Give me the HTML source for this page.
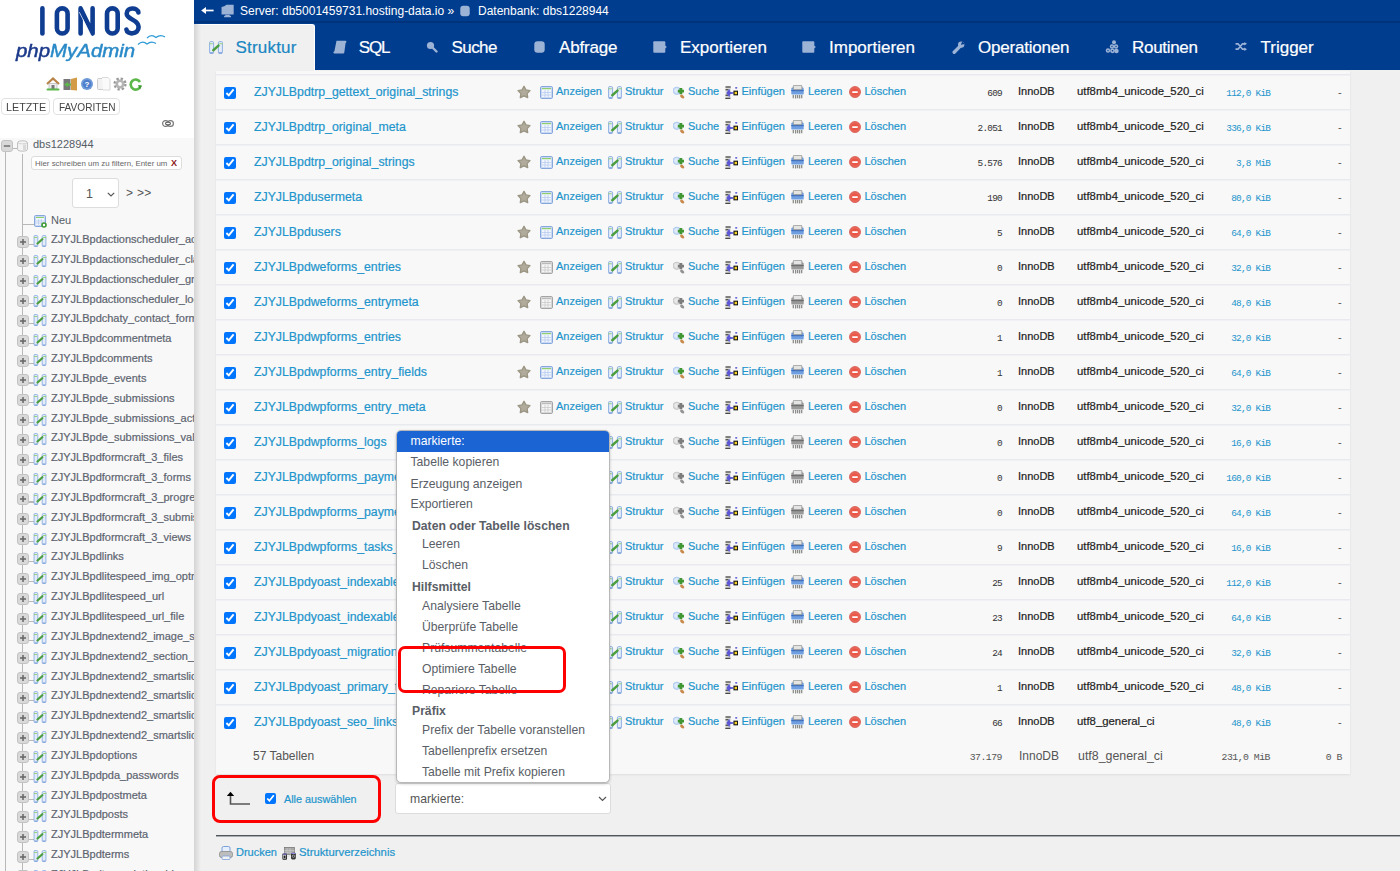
<!DOCTYPE html><html><head><meta charset='utf-8'><style>
*{box-sizing:border-box;margin:0;padding:0}
html,body{width:1400px;height:871px;overflow:hidden;background:#f0f0f0;font-family:"Liberation Sans",sans-serif;position:relative}
.a{position:absolute;white-space:nowrap}
svg{display:block}
.lk{color:#1e95cc;-webkit-text-stroke:0.2px}
.t{font-size:11px;line-height:15px}
.w{-webkit-text-stroke:0.2px}
.m{font-family:"Liberation Mono",monospace}
</style></head><body>

<svg width="0" height="0" style="position:absolute">
<defs>
<symbol id="star" viewBox="0 0 14 14"><path d="M7.00 1.30 L8.94 4.93 L12.99 5.65 L10.14 8.62 L10.70 12.70 L7.00 10.90 L3.30 12.70 L3.86 8.62 L1.01 5.65 L5.06 4.93 Z" fill="#b0ab9a" stroke="#9a9583" stroke-width="1.3" stroke-linejoin="round"/></symbol>
<symbol id="browse" viewBox="0 0 13 13"><rect x="0.5" y="0.5" width="12" height="12" rx="1.2" fill="#c9d9f3" stroke="#86a7dc"/><rect x="2" y="2.5" width="9" height="8.5" fill="#f2f6fd"/><rect x="2" y="2" width="9" height="1.2" fill="#8ed06e"/><path d="M5 4v7M8 4v7M2 6.5h9M2 9h9" stroke="#b7cbee" stroke-width="0.8"/></symbol>
<symbol id="struct" viewBox="0 0 14 13"><path d="M0.6 1.4 Q0.6 0.6 1.4 0.6 H3.4 Q4.6 0.6 4.6 1.8 V11.6 Q4.6 12.4 3.8 12.4 H1.4 Q0.6 12.4 0.6 11.6 Z" fill="#e4ecfa" stroke="#8eb0e2" stroke-width="1"/><path d="M13.4 1.4 Q13.4 0.6 12.6 0.6 H10.6 Q9.4 0.6 9.4 1.8 V11.6 Q9.4 12.4 10.2 12.4 H12.6 Q13.4 12.4 13.4 11.6 Z" fill="#e4ecfa" stroke="#8eb0e2" stroke-width="1"/><path d="M1 11.9h3.2M9.8 11.9h3.2" stroke="#7a9fd8" stroke-width="1.2"/><path d="M0.4 2.8h3.4M10.4 2.8h3.4" stroke="#98d27c" stroke-width="1.1"/><path d="M4.3 9.2 L9.5 4.6" stroke="#4c9e40" stroke-width="2.5" stroke-linecap="round"/></symbol>
<symbol id="search" viewBox="0 0 12 13"><circle cx="3.8" cy="4.8" r="3.7" fill="#c6daf6" stroke="#aac6ee" stroke-width="0.8"/><circle cx="3.6" cy="4.6" r="2.3" fill="#dfeafb"/><path d="M7.9 2v6.2M4.8 5.2h6.2" stroke="#3f9633" stroke-width="2.8"/><ellipse cx="9.2" cy="10.6" rx="2.3" ry="1.5" fill="#c98a4e" transform="rotate(40 9.2 10.6)"/></symbol>
<symbol id="insert" viewBox="0 0 13 13"><rect x="0.5" y="0.3" width="5.2" height="12.6" fill="#d8d8d4"/><path d="M0.5 1h5.2M0.5 3.8h3M0.5 9.2h3M0.3 12.3h5" stroke="#222" stroke-width="1"/><path d="M1.3 7 L4.3 2.8 L5.3 5.9 L8.4 6.2 V7.8 L5.3 8.1 L4.3 11.3 Z" fill="#5b57d6"/><rect x="9" y="5.2" width="3.6" height="3.6" fill="#f5d22a" stroke="#111" stroke-width="1.1"/><ellipse cx="11.2" cy="1.8" rx="1.2" ry="0.9" fill="#6060d8"/></symbol>
<symbol id="empty" viewBox="0 0 13 14"><path d="M2.3 10v3.3M4.6 10v3.6M6.6 10v3.2M8.6 10v3.6M10.7 10v3.3" stroke="#8c8c88" stroke-width="1.3"/><rect x="0.3" y="2.6" width="12.4" height="7" rx="1.2" fill="#6f9fe0"/><rect x="0.3" y="5" width="12.4" height="1.2" fill="#3f70c0"/><rect x="2.3" y="0.3" width="8.6" height="4.4" rx="1" fill="#e4e4e2" stroke="#8a8a86" stroke-width="0.8"/></symbol>
<symbol id="drop" viewBox="0 0 12 12"><circle cx="6" cy="6" r="5.5" fill="#e8685a" stroke="#d6564a" stroke-width="0.8"/><circle cx="6" cy="6" r="3.6" fill="#ea5546"/><rect x="3.2" y="5.2" width="5.6" height="1.8" rx="0.4" fill="#fff"/></symbol>
<symbol id="t_sql" viewBox="0 0 14 14"><path d="M3.5 0.8 H12.5 C13.6 0.8 13.8 2.6 12.6 2.9 L11.3 12.6 C11.2 13.2 10.8 13.4 10.2 13.4 H1.2 C0.2 13.4 0 11.6 1.4 11.3 Z" fill="#9db3d6"/></symbol>
<symbol id="t_search" viewBox="0 0 12 12"><circle cx="4.5" cy="4.5" r="3.6" fill="#9db3d6"/><path d="M6.5 6.5 L10.5 10.5" stroke="#9db3d6" stroke-width="2.4" stroke-linecap="round"/></symbol>
<symbol id="t_db" viewBox="0 0 11 12"><rect x="0.3" y="0.3" width="10.4" height="11.4" rx="3.2" fill="#9db3d6"/></symbol>
<symbol id="t_exp" viewBox="0 0 14 12"><rect x="0.3" y="0.3" width="12" height="11.4" rx="0.9" fill="#9db3d6"/><path d="M12 4.6 L13.9 6 L12 7.4Z" fill="#9db3d6"/></symbol>
<symbol id="t_wrench" viewBox="0 0 14 14"><path d="M2.2 12.2 L8 6.4" stroke="#9db3d6" stroke-width="3.4" stroke-linecap="round"/><circle cx="9.2" cy="4.6" r="3.2" fill="#9db3d6"/><path d="M8.8 4.8 L10.3 1.2 L13.2 3.9 Z" fill="#003d8f"/></symbol>
<symbol id="t_routine" viewBox="0 0 14 14"><g fill="#9db3d6"><circle cx="9" cy="2.2" r="2"/><circle cx="7" cy="6.5" r="2.2"/><circle cx="11" cy="6.5" r="2.2"/><circle cx="3" cy="10.5" r="2.2"/><circle cx="7.5" cy="10.8" r="2.4"/><circle cx="11.5" cy="11" r="2.2"/></g><g fill="#003d8f"><circle cx="7" cy="6.5" r="0.7"/><circle cx="11" cy="6.5" r="0.7"/><circle cx="7.5" cy="10.8" r="0.8"/><circle cx="3" cy="10.5" r="0.7"/></g></symbol>
<symbol id="t_trig" viewBox="0 0 12 9"><path d="M0.5 1.8 H3 L7.5 7.2 H10 M0.5 7.2 H3 L7.5 1.8 H10" stroke="#9db3d6" stroke-width="1.7" fill="none"/><path d="M9.3 0 L12 1.8 L9.3 3.6Z M9.3 5.4 L12 7.2 L9.3 9Z" fill="#9db3d6"/></symbol>
<symbol id="t_server" viewBox="0 0 12 12"><path d="M3 1.5 L5 0.3 H11.7 V9.3 H0.5 V2.3 Z" fill="#9db3d6"/><rect x="4" y="9.5" width="4" height="1.2" fill="#9db3d6"/><rect x="2.8" y="10.4" width="6.5" height="1.4" rx="0.6" fill="#9db3d6"/></symbol>
<symbol id="plus" viewBox="0 0 12 12"><rect x="0.5" y="0.5" width="11" height="11" rx="2.5" fill="#d9d9d9" stroke="#c2c2c2"/><path d="M3 6h6M6 3v6" stroke="#666" stroke-width="1.5"/></symbol>
<symbol id="minus" viewBox="0 0 12 12"><rect x="0.5" y="0.5" width="11" height="11" rx="2.5" fill="#d9d9d9" stroke="#c2c2c2"/><path d="M2.8 6h6.4" stroke="#777" stroke-width="1.6"/></symbol>
<symbol id="sdb" viewBox="0 0 11 12"><path d="M0.6 2.6 C0.6 0.2 10.4 0.2 10.4 2.6 V9.4 C10.4 11.8 0.6 11.8 0.6 9.4 Z" fill="#f4f4f4" stroke="#bdbdbd"/><path d="M0.8 2.8 C2 4.2 9 4.2 10.2 2.8" stroke="#c8c8c8" fill="none" stroke-width="0.8"/><rect x="6" y="4.5" width="3" height="5.5" fill="#d9d9d9"/></symbol>
<symbol id="newt" viewBox="0 0 13 13"><rect x="0.5" y="0.5" width="11" height="11" rx="1.2" fill="#c9d9f3" stroke="#86a7dc"/><rect x="2" y="2.5" width="8" height="7.5" fill="#f2f6fd"/><rect x="2" y="2" width="8" height="1" fill="#8ed06e"/><path d="M4.6 4v6M7.3 4v6M2 6h8M2 8h8" stroke="#b7cbee" stroke-width="0.8"/><circle cx="10" cy="10" r="2.8" fill="#3e9a33"/><circle cx="10" cy="10" r="1.2" fill="#fff"/></symbol>
<symbol id="print" viewBox="0 0 14 14"><rect x="3" y="0.5" width="8" height="6" rx="1.5" fill="#e6effc" stroke="#7aa0dc"/><rect x="0.5" y="5.5" width="13" height="6" rx="2" fill="#bdbdbd" stroke="#8a8a8a" stroke-width="0.8"/><rect x="3" y="10" width="8" height="3.5" rx="1" fill="#f2f2f2" stroke="#7aa0dc" stroke-width="0.8"/></symbol>
<symbol id="sv" viewBox="0 0 14 13"><rect x="2.5" y="0.3" width="10" height="7" fill="#a8a8a8" stroke="#666" stroke-width="0.6"/><path d="M5 1v6M8 1v6M2.5 3.5h10M2.5 5.3h10" stroke="#d0d0d0" stroke-width="0.6"/><rect x="0.4" y="6.5" width="4.6" height="6.2" rx="1" fill="#222"/><rect x="9" y="5.8" width="4.8" height="6.6" rx="1.4" fill="#333"/><rect x="0.8" y="6.6" width="3.8" height="1.1" fill="#8a84e0"/><rect x="9.4" y="5.9" width="4" height="1.1" fill="#8a84e0"/><path d="M5 10 L9 8" stroke="#ddd" stroke-width="1"/><rect x="1.6" y="8.4" width="2.2" height="3.2" fill="none" stroke="#ddd" stroke-width="0.6"/><circle cx="11.4" cy="9.2" r="1.2" fill="none" stroke="#ddd" stroke-width="0.6"/></symbol>
</defs></svg>

<div class='a' style='left:0;top:0;width:194px;height:871px;background:#f8f8f8'></div>
<div class='a' style='left:0;top:0;width:194px;height:138px;background:#fff'></div>
<div class='a' style='left:194px;top:0;width:1206px;height:70px;background:#003d8f'></div>
<div class='a' style='left:194px;top:21px;width:1206px;height:2px;background:#00337a'></div>
<svg class='a' style='left:201px;top:5px' width='13' height='11' viewBox='0 0 13 11'><path d='M3 5.5 H12.6' stroke='#fff' stroke-width='1.7'/><path d='M0.2 5.5 L5 2 V9 Z' fill='#fff'/></svg>
<svg class='a' style='left:221px;top:4px' width='13' height='14'><use href='#t_server'/></svg>
<div class='a' style='left:240px;top:4px;font-size:12px;color:#fff;line-height:15px'>Server: db5001459731.hosting-data.io &raquo;</div>
<svg class='a' style='left:460px;top:5px' width='10' height='12'><use href='#t_db'/></svg>
<div class='a' style='left:478px;top:4px;font-size:12px;color:#fff;line-height:15px'>Datenbank: dbs1228944</div>
<div class='a' style='left:194px;top:24px;width:121px;height:47px;background:#f0f0f0;border-top:1px solid #fff;border-right:1px solid #fff;border-top-right-radius:3px'></div>
<div class='a' style='left:194px;top:24px;width:7px;height:847px;background:linear-gradient(90deg,#d4d4d4,rgba(239,239,239,0))'></div>
<div class='a w' style='left:235.5px;top:38px;letter-spacing:0.2px;font-size:17px;line-height:20px;color:#1a87c2'>Struktur</div>
<div class='a w' style='left:358.7px;top:38px;letter-spacing:-1.1px;font-size:17px;line-height:20px;color:#fff'>SQL</div>
<div class='a w' style='left:451.6px;top:38px;letter-spacing:-0.6px;font-size:17px;line-height:20px;color:#fff'>Suche</div>
<div class='a w' style='left:559px;top:38px;letter-spacing:-0.2px;font-size:17px;line-height:20px;color:#fff'>Abfrage</div>
<div class='a w' style='left:680px;top:38px;letter-spacing:0px;font-size:17px;line-height:20px;color:#fff'>Exportieren</div>
<div class='a w' style='left:829px;top:38px;letter-spacing:0px;font-size:17px;line-height:20px;color:#fff'>Importieren</div>
<div class='a w' style='left:978px;top:38px;letter-spacing:-0.22px;font-size:17px;line-height:20px;color:#fff'>Operationen</div>
<div class='a w' style='left:1132px;top:38px;letter-spacing:-0.3px;font-size:17px;line-height:20px;color:#fff'>Routinen</div>
<div class='a w' style='left:1260.5px;top:38px;letter-spacing:0px;font-size:17px;line-height:20px;color:#fff'>Trigger</div>
<svg class='a' style='left:209px;top:40.5px' width='14' height='13'><use href='#struct'/></svg>
<svg class='a' style='left:333px;top:40px' width='14' height='14'><use href='#t_sql'/></svg>
<svg class='a' style='left:426px;top:41px' width='12' height='12'><use href='#t_search'/></svg>
<svg class='a' style='left:534px;top:41px' width='11' height='12'><use href='#t_db'/></svg>
<svg class='a' style='left:653px;top:41px' width='14' height='12'><use href='#t_exp'/></svg>
<svg class='a' style='left:802px;top:41px' width='14' height='12'><use href='#t_exp'/></svg>
<svg class='a' style='left:952px;top:40px' width='14' height='14'><use href='#t_wrench'/></svg>
<svg class='a' style='left:1105px;top:40px' width='14' height='14'><use href='#t_routine'/></svg>
<svg class='a' style='left:1235px;top:42px' width='12' height='9'><use href='#t_trig'/></svg>
<div class='a' style='left:216px;top:71px;width:1134px;height:703px;background:#f8f8f8;box-shadow:0 1px 2px rgba(0,0,0,.08)'></div>
<div class='a' style='left:216px;top:74px;width:1134px;height:1px;background:#e8eaee'></div><div class='a' style='left:216px;top:75px;width:1134px;height:1px;background:#f0f1f4'></div>
<input type='checkbox' checked class='a' style='left:224px;top:87px;width:12px;height:12px;margin:0'>
<div class='a lk' style='left:254px;top:85px;font-size:12.3px;line-height:15px'>ZJYJLBpdtrp_gettext_original_strings</div>
<svg class='a' style='left:517px;top:85px' width='14' height='14'><use href='#star'/></svg>
<div class='a lk t' style='left:556px;top:84px'>Anzeigen</div>
<svg class='a' style='left:540px;top:86px' width='13' height='13'><use href='#browse'/></svg>
<div class='a lk t' style='left:625px;top:84px'>Struktur</div>
<svg class='a' style='left:608px;top:86px' width='14' height='13'><use href='#struct'/></svg>
<div class='a lk t' style='left:688px;top:84px'>Suche</div>
<svg class='a' style='left:673px;top:86px' width='12' height='13'><use href='#search'/></svg>
<div class='a lk t' style='left:741.5px;top:84px'>Einfügen</div>
<svg class='a' style='left:725px;top:86px' width='13' height='13'><use href='#insert'/></svg>
<div class='a lk t' style='left:808px;top:84px'>Leeren</div>
<svg class='a' style='left:791px;top:85px' width='13' height='14'><use href='#empty'/></svg>
<div class='a lk t' style='left:864.5px;top:84px'>Löschen</div>
<svg class='a' style='left:849px;top:86px' width='12' height='12'><use href='#drop'/></svg>
<div class='a m' style='right:398px;top:87.2px;font-size:9.4px;letter-spacing:-0.75px;line-height:13px;color:#333'>609</div>
<div class='a t w' style='left:1018px;top:84px;color:#222'>InnoDB</div>
<div class='a w' style='left:1077px;top:84px;font-size:11.35px;line-height:15px;color:#222'>utf8mb4_unicode_520_ci</div>
<div class='a m' style='right:129.79999999999995px;top:87.2px;font-size:9.4px;letter-spacing:-0.75px;line-height:13px;color:#1e95cc'>112,0 KiB</div>
<div class='a t' style='left:1338px;top:85px;color:#555'>-</div>
<div class='a' style='left:216px;top:109px;width:1134px;height:1px;background:#e8eaee'></div><div class='a' style='left:216px;top:110px;width:1134px;height:1px;background:#f0f1f4'></div>
<input type='checkbox' checked class='a' style='left:224px;top:122px;width:12px;height:12px;margin:0'>
<div class='a lk' style='left:254px;top:120px;font-size:12.3px;line-height:15px'>ZJYJLBpdtrp_original_meta</div>
<svg class='a' style='left:517px;top:120px' width='14' height='14'><use href='#star'/></svg>
<div class='a lk t' style='left:556px;top:119px'>Anzeigen</div>
<svg class='a' style='left:540px;top:121px' width='13' height='13'><use href='#browse'/></svg>
<div class='a lk t' style='left:625px;top:119px'>Struktur</div>
<svg class='a' style='left:608px;top:121px' width='14' height='13'><use href='#struct'/></svg>
<div class='a lk t' style='left:688px;top:119px'>Suche</div>
<svg class='a' style='left:673px;top:121px' width='12' height='13'><use href='#search'/></svg>
<div class='a lk t' style='left:741.5px;top:119px'>Einfügen</div>
<svg class='a' style='left:725px;top:121px' width='13' height='13'><use href='#insert'/></svg>
<div class='a lk t' style='left:808px;top:119px'>Leeren</div>
<svg class='a' style='left:791px;top:120px' width='13' height='14'><use href='#empty'/></svg>
<div class='a lk t' style='left:864.5px;top:119px'>Löschen</div>
<svg class='a' style='left:849px;top:121px' width='12' height='12'><use href='#drop'/></svg>
<div class='a m' style='right:398px;top:122.2px;font-size:9.4px;letter-spacing:-0.75px;line-height:13px;color:#333'>2.051</div>
<div class='a t w' style='left:1018px;top:119px;color:#222'>InnoDB</div>
<div class='a w' style='left:1077px;top:119px;font-size:11.35px;line-height:15px;color:#222'>utf8mb4_unicode_520_ci</div>
<div class='a m' style='right:129.79999999999995px;top:122.2px;font-size:9.4px;letter-spacing:-0.75px;line-height:13px;color:#1e95cc'>336,0 KiB</div>
<div class='a t' style='left:1338px;top:120px;color:#555'>-</div>
<div class='a' style='left:216px;top:144px;width:1134px;height:1px;background:#e8eaee'></div><div class='a' style='left:216px;top:145px;width:1134px;height:1px;background:#f0f1f4'></div>
<input type='checkbox' checked class='a' style='left:224px;top:157px;width:12px;height:12px;margin:0'>
<div class='a lk' style='left:254px;top:155px;font-size:12.3px;line-height:15px'>ZJYJLBpdtrp_original_strings</div>
<svg class='a' style='left:517px;top:155px' width='14' height='14'><use href='#star'/></svg>
<div class='a lk t' style='left:556px;top:154px'>Anzeigen</div>
<svg class='a' style='left:540px;top:156px' width='13' height='13'><use href='#browse'/></svg>
<div class='a lk t' style='left:625px;top:154px'>Struktur</div>
<svg class='a' style='left:608px;top:156px' width='14' height='13'><use href='#struct'/></svg>
<div class='a lk t' style='left:688px;top:154px'>Suche</div>
<svg class='a' style='left:673px;top:156px' width='12' height='13'><use href='#search'/></svg>
<div class='a lk t' style='left:741.5px;top:154px'>Einfügen</div>
<svg class='a' style='left:725px;top:156px' width='13' height='13'><use href='#insert'/></svg>
<div class='a lk t' style='left:808px;top:154px'>Leeren</div>
<svg class='a' style='left:791px;top:155px' width='13' height='14'><use href='#empty'/></svg>
<div class='a lk t' style='left:864.5px;top:154px'>Löschen</div>
<svg class='a' style='left:849px;top:156px' width='12' height='12'><use href='#drop'/></svg>
<div class='a m' style='right:398px;top:157.2px;font-size:9.4px;letter-spacing:-0.75px;line-height:13px;color:#333'>5.576</div>
<div class='a t w' style='left:1018px;top:154px;color:#222'>InnoDB</div>
<div class='a w' style='left:1077px;top:154px;font-size:11.35px;line-height:15px;color:#222'>utf8mb4_unicode_520_ci</div>
<div class='a m' style='right:129.79999999999995px;top:157.2px;font-size:9.4px;letter-spacing:-0.75px;line-height:13px;color:#1e95cc'>3,8 MiB</div>
<div class='a t' style='left:1338px;top:155px;color:#555'>-</div>
<div class='a' style='left:216px;top:179px;width:1134px;height:1px;background:#e8eaee'></div><div class='a' style='left:216px;top:180px;width:1134px;height:1px;background:#f0f1f4'></div>
<input type='checkbox' checked class='a' style='left:224px;top:192px;width:12px;height:12px;margin:0'>
<div class='a lk' style='left:254px;top:190px;font-size:12.3px;line-height:15px'>ZJYJLBpdusermeta</div>
<svg class='a' style='left:517px;top:190px' width='14' height='14'><use href='#star'/></svg>
<div class='a lk t' style='left:556px;top:189px'>Anzeigen</div>
<svg class='a' style='left:540px;top:191px' width='13' height='13'><use href='#browse'/></svg>
<div class='a lk t' style='left:625px;top:189px'>Struktur</div>
<svg class='a' style='left:608px;top:191px' width='14' height='13'><use href='#struct'/></svg>
<div class='a lk t' style='left:688px;top:189px'>Suche</div>
<svg class='a' style='left:673px;top:191px' width='12' height='13'><use href='#search'/></svg>
<div class='a lk t' style='left:741.5px;top:189px'>Einfügen</div>
<svg class='a' style='left:725px;top:191px' width='13' height='13'><use href='#insert'/></svg>
<div class='a lk t' style='left:808px;top:189px'>Leeren</div>
<svg class='a' style='left:791px;top:190px' width='13' height='14'><use href='#empty'/></svg>
<div class='a lk t' style='left:864.5px;top:189px'>Löschen</div>
<svg class='a' style='left:849px;top:191px' width='12' height='12'><use href='#drop'/></svg>
<div class='a m' style='right:398px;top:192.2px;font-size:9.4px;letter-spacing:-0.75px;line-height:13px;color:#333'>190</div>
<div class='a t w' style='left:1018px;top:189px;color:#222'>InnoDB</div>
<div class='a w' style='left:1077px;top:189px;font-size:11.35px;line-height:15px;color:#222'>utf8mb4_unicode_520_ci</div>
<div class='a m' style='right:129.79999999999995px;top:192.2px;font-size:9.4px;letter-spacing:-0.75px;line-height:13px;color:#1e95cc'>80,0 KiB</div>
<div class='a t' style='left:1338px;top:190px;color:#555'>-</div>
<div class='a' style='left:216px;top:214px;width:1134px;height:1px;background:#e8eaee'></div><div class='a' style='left:216px;top:215px;width:1134px;height:1px;background:#f0f1f4'></div>
<input type='checkbox' checked class='a' style='left:224px;top:227px;width:12px;height:12px;margin:0'>
<div class='a lk' style='left:254px;top:225px;font-size:12.3px;line-height:15px'>ZJYJLBpdusers</div>
<svg class='a' style='left:517px;top:225px' width='14' height='14'><use href='#star'/></svg>
<div class='a lk t' style='left:556px;top:224px'>Anzeigen</div>
<svg class='a' style='left:540px;top:226px' width='13' height='13'><use href='#browse'/></svg>
<div class='a lk t' style='left:625px;top:224px'>Struktur</div>
<svg class='a' style='left:608px;top:226px' width='14' height='13'><use href='#struct'/></svg>
<div class='a lk t' style='left:688px;top:224px'>Suche</div>
<svg class='a' style='left:673px;top:226px' width='12' height='13'><use href='#search'/></svg>
<div class='a lk t' style='left:741.5px;top:224px'>Einfügen</div>
<svg class='a' style='left:725px;top:226px' width='13' height='13'><use href='#insert'/></svg>
<div class='a lk t' style='left:808px;top:224px'>Leeren</div>
<svg class='a' style='left:791px;top:225px' width='13' height='14'><use href='#empty'/></svg>
<div class='a lk t' style='left:864.5px;top:224px'>Löschen</div>
<svg class='a' style='left:849px;top:226px' width='12' height='12'><use href='#drop'/></svg>
<div class='a m' style='right:398px;top:227.2px;font-size:9.4px;letter-spacing:-0.75px;line-height:13px;color:#333'>5</div>
<div class='a t w' style='left:1018px;top:224px;color:#222'>InnoDB</div>
<div class='a w' style='left:1077px;top:224px;font-size:11.35px;line-height:15px;color:#222'>utf8mb4_unicode_520_ci</div>
<div class='a m' style='right:129.79999999999995px;top:227.2px;font-size:9.4px;letter-spacing:-0.75px;line-height:13px;color:#1e95cc'>64,0 KiB</div>
<div class='a t' style='left:1338px;top:225px;color:#555'>-</div>
<div class='a' style='left:216px;top:249px;width:1134px;height:1px;background:#e8eaee'></div><div class='a' style='left:216px;top:250px;width:1134px;height:1px;background:#f0f1f4'></div>
<input type='checkbox' checked class='a' style='left:224px;top:262px;width:12px;height:12px;margin:0'>
<div class='a lk' style='left:254px;top:260px;font-size:12.3px;line-height:15px'>ZJYJLBpdweforms_entries</div>
<svg class='a' style='left:517px;top:260px' width='14' height='14'><use href='#star'/></svg>
<div class='a lk t' style='left:556px;top:259px'>Anzeigen</div>
<svg class='a' style='left:540px;top:261px;filter:grayscale(1)' width='13' height='13'><use href='#browse'/></svg>
<div class='a lk t' style='left:625px;top:259px'>Struktur</div>
<svg class='a' style='left:608px;top:261px' width='14' height='13'><use href='#struct'/></svg>
<div class='a lk t' style='left:688px;top:259px'>Suche</div>
<svg class='a' style='left:673px;top:261px;filter:grayscale(1)' width='12' height='13'><use href='#search'/></svg>
<div class='a lk t' style='left:741.5px;top:259px'>Einfügen</div>
<svg class='a' style='left:725px;top:261px' width='13' height='13'><use href='#insert'/></svg>
<div class='a lk t' style='left:808px;top:259px'>Leeren</div>
<svg class='a' style='left:791px;top:260px;filter:grayscale(1)' width='13' height='14'><use href='#empty'/></svg>
<div class='a lk t' style='left:864.5px;top:259px'>Löschen</div>
<svg class='a' style='left:849px;top:261px' width='12' height='12'><use href='#drop'/></svg>
<div class='a m' style='right:398px;top:262.2px;font-size:9.4px;letter-spacing:-0.75px;line-height:13px;color:#333'>0</div>
<div class='a t w' style='left:1018px;top:259px;color:#222'>InnoDB</div>
<div class='a w' style='left:1077px;top:259px;font-size:11.35px;line-height:15px;color:#222'>utf8mb4_unicode_520_ci</div>
<div class='a m' style='right:129.79999999999995px;top:262.2px;font-size:9.4px;letter-spacing:-0.75px;line-height:13px;color:#1e95cc'>32,0 KiB</div>
<div class='a t' style='left:1338px;top:260px;color:#555'>-</div>
<div class='a' style='left:216px;top:284px;width:1134px;height:1px;background:#e8eaee'></div><div class='a' style='left:216px;top:285px;width:1134px;height:1px;background:#f0f1f4'></div>
<input type='checkbox' checked class='a' style='left:224px;top:297px;width:12px;height:12px;margin:0'>
<div class='a lk' style='left:254px;top:295px;font-size:12.3px;line-height:15px'>ZJYJLBpdweforms_entrymeta</div>
<svg class='a' style='left:517px;top:295px' width='14' height='14'><use href='#star'/></svg>
<div class='a lk t' style='left:556px;top:294px'>Anzeigen</div>
<svg class='a' style='left:540px;top:296px;filter:grayscale(1)' width='13' height='13'><use href='#browse'/></svg>
<div class='a lk t' style='left:625px;top:294px'>Struktur</div>
<svg class='a' style='left:608px;top:296px' width='14' height='13'><use href='#struct'/></svg>
<div class='a lk t' style='left:688px;top:294px'>Suche</div>
<svg class='a' style='left:673px;top:296px;filter:grayscale(1)' width='12' height='13'><use href='#search'/></svg>
<div class='a lk t' style='left:741.5px;top:294px'>Einfügen</div>
<svg class='a' style='left:725px;top:296px' width='13' height='13'><use href='#insert'/></svg>
<div class='a lk t' style='left:808px;top:294px'>Leeren</div>
<svg class='a' style='left:791px;top:295px;filter:grayscale(1)' width='13' height='14'><use href='#empty'/></svg>
<div class='a lk t' style='left:864.5px;top:294px'>Löschen</div>
<svg class='a' style='left:849px;top:296px' width='12' height='12'><use href='#drop'/></svg>
<div class='a m' style='right:398px;top:297.2px;font-size:9.4px;letter-spacing:-0.75px;line-height:13px;color:#333'>0</div>
<div class='a t w' style='left:1018px;top:294px;color:#222'>InnoDB</div>
<div class='a w' style='left:1077px;top:294px;font-size:11.35px;line-height:15px;color:#222'>utf8mb4_unicode_520_ci</div>
<div class='a m' style='right:129.79999999999995px;top:297.2px;font-size:9.4px;letter-spacing:-0.75px;line-height:13px;color:#1e95cc'>48,0 KiB</div>
<div class='a t' style='left:1338px;top:295px;color:#555'>-</div>
<div class='a' style='left:216px;top:319px;width:1134px;height:1px;background:#e8eaee'></div><div class='a' style='left:216px;top:320px;width:1134px;height:1px;background:#f0f1f4'></div>
<input type='checkbox' checked class='a' style='left:224px;top:332px;width:12px;height:12px;margin:0'>
<div class='a lk' style='left:254px;top:330px;font-size:12.3px;line-height:15px'>ZJYJLBpdwpforms_entries</div>
<svg class='a' style='left:517px;top:330px' width='14' height='14'><use href='#star'/></svg>
<div class='a lk t' style='left:556px;top:329px'>Anzeigen</div>
<svg class='a' style='left:540px;top:331px' width='13' height='13'><use href='#browse'/></svg>
<div class='a lk t' style='left:625px;top:329px'>Struktur</div>
<svg class='a' style='left:608px;top:331px' width='14' height='13'><use href='#struct'/></svg>
<div class='a lk t' style='left:688px;top:329px'>Suche</div>
<svg class='a' style='left:673px;top:331px' width='12' height='13'><use href='#search'/></svg>
<div class='a lk t' style='left:741.5px;top:329px'>Einfügen</div>
<svg class='a' style='left:725px;top:331px' width='13' height='13'><use href='#insert'/></svg>
<div class='a lk t' style='left:808px;top:329px'>Leeren</div>
<svg class='a' style='left:791px;top:330px' width='13' height='14'><use href='#empty'/></svg>
<div class='a lk t' style='left:864.5px;top:329px'>Löschen</div>
<svg class='a' style='left:849px;top:331px' width='12' height='12'><use href='#drop'/></svg>
<div class='a m' style='right:398px;top:332.2px;font-size:9.4px;letter-spacing:-0.75px;line-height:13px;color:#333'>1</div>
<div class='a t w' style='left:1018px;top:329px;color:#222'>InnoDB</div>
<div class='a w' style='left:1077px;top:329px;font-size:11.35px;line-height:15px;color:#222'>utf8mb4_unicode_520_ci</div>
<div class='a m' style='right:129.79999999999995px;top:332.2px;font-size:9.4px;letter-spacing:-0.75px;line-height:13px;color:#1e95cc'>32,0 KiB</div>
<div class='a t' style='left:1338px;top:330px;color:#555'>-</div>
<div class='a' style='left:216px;top:354px;width:1134px;height:1px;background:#e8eaee'></div><div class='a' style='left:216px;top:355px;width:1134px;height:1px;background:#f0f1f4'></div>
<input type='checkbox' checked class='a' style='left:224px;top:367px;width:12px;height:12px;margin:0'>
<div class='a lk' style='left:254px;top:365px;font-size:12.3px;line-height:15px'>ZJYJLBpdwpforms_entry_fields</div>
<svg class='a' style='left:517px;top:365px' width='14' height='14'><use href='#star'/></svg>
<div class='a lk t' style='left:556px;top:364px'>Anzeigen</div>
<svg class='a' style='left:540px;top:366px' width='13' height='13'><use href='#browse'/></svg>
<div class='a lk t' style='left:625px;top:364px'>Struktur</div>
<svg class='a' style='left:608px;top:366px' width='14' height='13'><use href='#struct'/></svg>
<div class='a lk t' style='left:688px;top:364px'>Suche</div>
<svg class='a' style='left:673px;top:366px' width='12' height='13'><use href='#search'/></svg>
<div class='a lk t' style='left:741.5px;top:364px'>Einfügen</div>
<svg class='a' style='left:725px;top:366px' width='13' height='13'><use href='#insert'/></svg>
<div class='a lk t' style='left:808px;top:364px'>Leeren</div>
<svg class='a' style='left:791px;top:365px' width='13' height='14'><use href='#empty'/></svg>
<div class='a lk t' style='left:864.5px;top:364px'>Löschen</div>
<svg class='a' style='left:849px;top:366px' width='12' height='12'><use href='#drop'/></svg>
<div class='a m' style='right:398px;top:367.2px;font-size:9.4px;letter-spacing:-0.75px;line-height:13px;color:#333'>1</div>
<div class='a t w' style='left:1018px;top:364px;color:#222'>InnoDB</div>
<div class='a w' style='left:1077px;top:364px;font-size:11.35px;line-height:15px;color:#222'>utf8mb4_unicode_520_ci</div>
<div class='a m' style='right:129.79999999999995px;top:367.2px;font-size:9.4px;letter-spacing:-0.75px;line-height:13px;color:#1e95cc'>64,0 KiB</div>
<div class='a t' style='left:1338px;top:365px;color:#555'>-</div>
<div class='a' style='left:216px;top:389px;width:1134px;height:1px;background:#e8eaee'></div><div class='a' style='left:216px;top:390px;width:1134px;height:1px;background:#f0f1f4'></div>
<input type='checkbox' checked class='a' style='left:224px;top:402px;width:12px;height:12px;margin:0'>
<div class='a lk' style='left:254px;top:400px;font-size:12.3px;line-height:15px'>ZJYJLBpdwpforms_entry_meta</div>
<svg class='a' style='left:517px;top:400px' width='14' height='14'><use href='#star'/></svg>
<div class='a lk t' style='left:556px;top:399px'>Anzeigen</div>
<svg class='a' style='left:540px;top:401px;filter:grayscale(1)' width='13' height='13'><use href='#browse'/></svg>
<div class='a lk t' style='left:625px;top:399px'>Struktur</div>
<svg class='a' style='left:608px;top:401px' width='14' height='13'><use href='#struct'/></svg>
<div class='a lk t' style='left:688px;top:399px'>Suche</div>
<svg class='a' style='left:673px;top:401px;filter:grayscale(1)' width='12' height='13'><use href='#search'/></svg>
<div class='a lk t' style='left:741.5px;top:399px'>Einfügen</div>
<svg class='a' style='left:725px;top:401px' width='13' height='13'><use href='#insert'/></svg>
<div class='a lk t' style='left:808px;top:399px'>Leeren</div>
<svg class='a' style='left:791px;top:400px;filter:grayscale(1)' width='13' height='14'><use href='#empty'/></svg>
<div class='a lk t' style='left:864.5px;top:399px'>Löschen</div>
<svg class='a' style='left:849px;top:401px' width='12' height='12'><use href='#drop'/></svg>
<div class='a m' style='right:398px;top:402.2px;font-size:9.4px;letter-spacing:-0.75px;line-height:13px;color:#333'>0</div>
<div class='a t w' style='left:1018px;top:399px;color:#222'>InnoDB</div>
<div class='a w' style='left:1077px;top:399px;font-size:11.35px;line-height:15px;color:#222'>utf8mb4_unicode_520_ci</div>
<div class='a m' style='right:129.79999999999995px;top:402.2px;font-size:9.4px;letter-spacing:-0.75px;line-height:13px;color:#1e95cc'>32,0 KiB</div>
<div class='a t' style='left:1338px;top:400px;color:#555'>-</div>
<div class='a' style='left:216px;top:424px;width:1134px;height:1px;background:#e8eaee'></div><div class='a' style='left:216px;top:425px;width:1134px;height:1px;background:#f0f1f4'></div>
<input type='checkbox' checked class='a' style='left:224px;top:437px;width:12px;height:12px;margin:0'>
<div class='a lk' style='left:254px;top:435px;font-size:12.3px;line-height:15px'>ZJYJLBpdwpforms_logs</div>
<svg class='a' style='left:517px;top:435px' width='14' height='14'><use href='#star'/></svg>
<div class='a lk t' style='left:556px;top:434px'>Anzeigen</div>
<svg class='a' style='left:540px;top:436px;filter:grayscale(1)' width='13' height='13'><use href='#browse'/></svg>
<div class='a lk t' style='left:625px;top:434px'>Struktur</div>
<svg class='a' style='left:608px;top:436px' width='14' height='13'><use href='#struct'/></svg>
<div class='a lk t' style='left:688px;top:434px'>Suche</div>
<svg class='a' style='left:673px;top:436px;filter:grayscale(1)' width='12' height='13'><use href='#search'/></svg>
<div class='a lk t' style='left:741.5px;top:434px'>Einfügen</div>
<svg class='a' style='left:725px;top:436px' width='13' height='13'><use href='#insert'/></svg>
<div class='a lk t' style='left:808px;top:434px'>Leeren</div>
<svg class='a' style='left:791px;top:435px;filter:grayscale(1)' width='13' height='14'><use href='#empty'/></svg>
<div class='a lk t' style='left:864.5px;top:434px'>Löschen</div>
<svg class='a' style='left:849px;top:436px' width='12' height='12'><use href='#drop'/></svg>
<div class='a m' style='right:398px;top:437.2px;font-size:9.4px;letter-spacing:-0.75px;line-height:13px;color:#333'>0</div>
<div class='a t w' style='left:1018px;top:434px;color:#222'>InnoDB</div>
<div class='a w' style='left:1077px;top:434px;font-size:11.35px;line-height:15px;color:#222'>utf8mb4_unicode_520_ci</div>
<div class='a m' style='right:129.79999999999995px;top:437.2px;font-size:9.4px;letter-spacing:-0.75px;line-height:13px;color:#1e95cc'>16,0 KiB</div>
<div class='a t' style='left:1338px;top:435px;color:#555'>-</div>
<div class='a' style='left:216px;top:459px;width:1134px;height:1px;background:#e8eaee'></div><div class='a' style='left:216px;top:460px;width:1134px;height:1px;background:#f0f1f4'></div>
<input type='checkbox' checked class='a' style='left:224px;top:472px;width:12px;height:12px;margin:0'>
<div class='a lk' style='left:254px;top:470px;font-size:12.3px;line-height:15px'>ZJYJLBpdwpforms_payments</div>
<svg class='a' style='left:517px;top:470px' width='14' height='14'><use href='#star'/></svg>
<div class='a lk t' style='left:556px;top:469px'>Anzeigen</div>
<svg class='a' style='left:540px;top:471px;filter:grayscale(1)' width='13' height='13'><use href='#browse'/></svg>
<div class='a lk t' style='left:625px;top:469px'>Struktur</div>
<svg class='a' style='left:608px;top:471px' width='14' height='13'><use href='#struct'/></svg>
<div class='a lk t' style='left:688px;top:469px'>Suche</div>
<svg class='a' style='left:673px;top:471px;filter:grayscale(1)' width='12' height='13'><use href='#search'/></svg>
<div class='a lk t' style='left:741.5px;top:469px'>Einfügen</div>
<svg class='a' style='left:725px;top:471px' width='13' height='13'><use href='#insert'/></svg>
<div class='a lk t' style='left:808px;top:469px'>Leeren</div>
<svg class='a' style='left:791px;top:470px;filter:grayscale(1)' width='13' height='14'><use href='#empty'/></svg>
<div class='a lk t' style='left:864.5px;top:469px'>Löschen</div>
<svg class='a' style='left:849px;top:471px' width='12' height='12'><use href='#drop'/></svg>
<div class='a m' style='right:398px;top:472.2px;font-size:9.4px;letter-spacing:-0.75px;line-height:13px;color:#333'>0</div>
<div class='a t w' style='left:1018px;top:469px;color:#222'>InnoDB</div>
<div class='a w' style='left:1077px;top:469px;font-size:11.35px;line-height:15px;color:#222'>utf8mb4_unicode_520_ci</div>
<div class='a m' style='right:129.79999999999995px;top:472.2px;font-size:9.4px;letter-spacing:-0.75px;line-height:13px;color:#1e95cc'>160,0 KiB</div>
<div class='a t' style='left:1338px;top:470px;color:#555'>-</div>
<div class='a' style='left:216px;top:494px;width:1134px;height:1px;background:#e8eaee'></div><div class='a' style='left:216px;top:495px;width:1134px;height:1px;background:#f0f1f4'></div>
<input type='checkbox' checked class='a' style='left:224px;top:507px;width:12px;height:12px;margin:0'>
<div class='a lk' style='left:254px;top:505px;font-size:12.3px;line-height:15px'>ZJYJLBpdwpforms_paymentmeta</div>
<svg class='a' style='left:517px;top:505px' width='14' height='14'><use href='#star'/></svg>
<div class='a lk t' style='left:556px;top:504px'>Anzeigen</div>
<svg class='a' style='left:540px;top:506px;filter:grayscale(1)' width='13' height='13'><use href='#browse'/></svg>
<div class='a lk t' style='left:625px;top:504px'>Struktur</div>
<svg class='a' style='left:608px;top:506px' width='14' height='13'><use href='#struct'/></svg>
<div class='a lk t' style='left:688px;top:504px'>Suche</div>
<svg class='a' style='left:673px;top:506px;filter:grayscale(1)' width='12' height='13'><use href='#search'/></svg>
<div class='a lk t' style='left:741.5px;top:504px'>Einfügen</div>
<svg class='a' style='left:725px;top:506px' width='13' height='13'><use href='#insert'/></svg>
<div class='a lk t' style='left:808px;top:504px'>Leeren</div>
<svg class='a' style='left:791px;top:505px;filter:grayscale(1)' width='13' height='14'><use href='#empty'/></svg>
<div class='a lk t' style='left:864.5px;top:504px'>Löschen</div>
<svg class='a' style='left:849px;top:506px' width='12' height='12'><use href='#drop'/></svg>
<div class='a m' style='right:398px;top:507.2px;font-size:9.4px;letter-spacing:-0.75px;line-height:13px;color:#333'>0</div>
<div class='a t w' style='left:1018px;top:504px;color:#222'>InnoDB</div>
<div class='a w' style='left:1077px;top:504px;font-size:11.35px;line-height:15px;color:#222'>utf8mb4_unicode_520_ci</div>
<div class='a m' style='right:129.79999999999995px;top:507.2px;font-size:9.4px;letter-spacing:-0.75px;line-height:13px;color:#1e95cc'>64,0 KiB</div>
<div class='a t' style='left:1338px;top:505px;color:#555'>-</div>
<div class='a' style='left:216px;top:529px;width:1134px;height:1px;background:#e8eaee'></div><div class='a' style='left:216px;top:530px;width:1134px;height:1px;background:#f0f1f4'></div>
<input type='checkbox' checked class='a' style='left:224px;top:542px;width:12px;height:12px;margin:0'>
<div class='a lk' style='left:254px;top:540px;font-size:12.3px;line-height:15px'>ZJYJLBpdwpforms_tasks_meta</div>
<svg class='a' style='left:517px;top:540px' width='14' height='14'><use href='#star'/></svg>
<div class='a lk t' style='left:556px;top:539px'>Anzeigen</div>
<svg class='a' style='left:540px;top:541px' width='13' height='13'><use href='#browse'/></svg>
<div class='a lk t' style='left:625px;top:539px'>Struktur</div>
<svg class='a' style='left:608px;top:541px' width='14' height='13'><use href='#struct'/></svg>
<div class='a lk t' style='left:688px;top:539px'>Suche</div>
<svg class='a' style='left:673px;top:541px' width='12' height='13'><use href='#search'/></svg>
<div class='a lk t' style='left:741.5px;top:539px'>Einfügen</div>
<svg class='a' style='left:725px;top:541px' width='13' height='13'><use href='#insert'/></svg>
<div class='a lk t' style='left:808px;top:539px'>Leeren</div>
<svg class='a' style='left:791px;top:540px' width='13' height='14'><use href='#empty'/></svg>
<div class='a lk t' style='left:864.5px;top:539px'>Löschen</div>
<svg class='a' style='left:849px;top:541px' width='12' height='12'><use href='#drop'/></svg>
<div class='a m' style='right:398px;top:542.2px;font-size:9.4px;letter-spacing:-0.75px;line-height:13px;color:#333'>9</div>
<div class='a t w' style='left:1018px;top:539px;color:#222'>InnoDB</div>
<div class='a w' style='left:1077px;top:539px;font-size:11.35px;line-height:15px;color:#222'>utf8mb4_unicode_520_ci</div>
<div class='a m' style='right:129.79999999999995px;top:542.2px;font-size:9.4px;letter-spacing:-0.75px;line-height:13px;color:#1e95cc'>16,0 KiB</div>
<div class='a t' style='left:1338px;top:540px;color:#555'>-</div>
<div class='a' style='left:216px;top:564px;width:1134px;height:1px;background:#e8eaee'></div><div class='a' style='left:216px;top:565px;width:1134px;height:1px;background:#f0f1f4'></div>
<input type='checkbox' checked class='a' style='left:224px;top:577px;width:12px;height:12px;margin:0'>
<div class='a lk' style='left:254px;top:575px;font-size:12.3px;line-height:15px'>ZJYJLBpdyoast_indexable</div>
<svg class='a' style='left:517px;top:575px' width='14' height='14'><use href='#star'/></svg>
<div class='a lk t' style='left:556px;top:574px'>Anzeigen</div>
<svg class='a' style='left:540px;top:576px' width='13' height='13'><use href='#browse'/></svg>
<div class='a lk t' style='left:625px;top:574px'>Struktur</div>
<svg class='a' style='left:608px;top:576px' width='14' height='13'><use href='#struct'/></svg>
<div class='a lk t' style='left:688px;top:574px'>Suche</div>
<svg class='a' style='left:673px;top:576px' width='12' height='13'><use href='#search'/></svg>
<div class='a lk t' style='left:741.5px;top:574px'>Einfügen</div>
<svg class='a' style='left:725px;top:576px' width='13' height='13'><use href='#insert'/></svg>
<div class='a lk t' style='left:808px;top:574px'>Leeren</div>
<svg class='a' style='left:791px;top:575px' width='13' height='14'><use href='#empty'/></svg>
<div class='a lk t' style='left:864.5px;top:574px'>Löschen</div>
<svg class='a' style='left:849px;top:576px' width='12' height='12'><use href='#drop'/></svg>
<div class='a m' style='right:398px;top:577.2px;font-size:9.4px;letter-spacing:-0.75px;line-height:13px;color:#333'>25</div>
<div class='a t w' style='left:1018px;top:574px;color:#222'>InnoDB</div>
<div class='a w' style='left:1077px;top:574px;font-size:11.35px;line-height:15px;color:#222'>utf8mb4_unicode_520_ci</div>
<div class='a m' style='right:129.79999999999995px;top:577.2px;font-size:9.4px;letter-spacing:-0.75px;line-height:13px;color:#1e95cc'>112,0 KiB</div>
<div class='a t' style='left:1338px;top:575px;color:#555'>-</div>
<div class='a' style='left:216px;top:599px;width:1134px;height:1px;background:#e8eaee'></div><div class='a' style='left:216px;top:600px;width:1134px;height:1px;background:#f0f1f4'></div>
<input type='checkbox' checked class='a' style='left:224px;top:612px;width:12px;height:12px;margin:0'>
<div class='a lk' style='left:254px;top:610px;font-size:12.3px;line-height:15px'>ZJYJLBpdyoast_indexable_hierarchy</div>
<svg class='a' style='left:517px;top:610px' width='14' height='14'><use href='#star'/></svg>
<div class='a lk t' style='left:556px;top:609px'>Anzeigen</div>
<svg class='a' style='left:540px;top:611px' width='13' height='13'><use href='#browse'/></svg>
<div class='a lk t' style='left:625px;top:609px'>Struktur</div>
<svg class='a' style='left:608px;top:611px' width='14' height='13'><use href='#struct'/></svg>
<div class='a lk t' style='left:688px;top:609px'>Suche</div>
<svg class='a' style='left:673px;top:611px' width='12' height='13'><use href='#search'/></svg>
<div class='a lk t' style='left:741.5px;top:609px'>Einfügen</div>
<svg class='a' style='left:725px;top:611px' width='13' height='13'><use href='#insert'/></svg>
<div class='a lk t' style='left:808px;top:609px'>Leeren</div>
<svg class='a' style='left:791px;top:610px' width='13' height='14'><use href='#empty'/></svg>
<div class='a lk t' style='left:864.5px;top:609px'>Löschen</div>
<svg class='a' style='left:849px;top:611px' width='12' height='12'><use href='#drop'/></svg>
<div class='a m' style='right:398px;top:612.2px;font-size:9.4px;letter-spacing:-0.75px;line-height:13px;color:#333'>23</div>
<div class='a t w' style='left:1018px;top:609px;color:#222'>InnoDB</div>
<div class='a w' style='left:1077px;top:609px;font-size:11.35px;line-height:15px;color:#222'>utf8mb4_unicode_520_ci</div>
<div class='a m' style='right:129.79999999999995px;top:612.2px;font-size:9.4px;letter-spacing:-0.75px;line-height:13px;color:#1e95cc'>64,0 KiB</div>
<div class='a t' style='left:1338px;top:610px;color:#555'>-</div>
<div class='a' style='left:216px;top:634px;width:1134px;height:1px;background:#e8eaee'></div><div class='a' style='left:216px;top:635px;width:1134px;height:1px;background:#f0f1f4'></div>
<input type='checkbox' checked class='a' style='left:224px;top:647px;width:12px;height:12px;margin:0'>
<div class='a lk' style='left:254px;top:645px;font-size:12.3px;line-height:15px'>ZJYJLBpdyoast_migrations</div>
<svg class='a' style='left:517px;top:645px' width='14' height='14'><use href='#star'/></svg>
<div class='a lk t' style='left:556px;top:644px'>Anzeigen</div>
<svg class='a' style='left:540px;top:646px' width='13' height='13'><use href='#browse'/></svg>
<div class='a lk t' style='left:625px;top:644px'>Struktur</div>
<svg class='a' style='left:608px;top:646px' width='14' height='13'><use href='#struct'/></svg>
<div class='a lk t' style='left:688px;top:644px'>Suche</div>
<svg class='a' style='left:673px;top:646px' width='12' height='13'><use href='#search'/></svg>
<div class='a lk t' style='left:741.5px;top:644px'>Einfügen</div>
<svg class='a' style='left:725px;top:646px' width='13' height='13'><use href='#insert'/></svg>
<div class='a lk t' style='left:808px;top:644px'>Leeren</div>
<svg class='a' style='left:791px;top:645px' width='13' height='14'><use href='#empty'/></svg>
<div class='a lk t' style='left:864.5px;top:644px'>Löschen</div>
<svg class='a' style='left:849px;top:646px' width='12' height='12'><use href='#drop'/></svg>
<div class='a m' style='right:398px;top:647.2px;font-size:9.4px;letter-spacing:-0.75px;line-height:13px;color:#333'>24</div>
<div class='a t w' style='left:1018px;top:644px;color:#222'>InnoDB</div>
<div class='a w' style='left:1077px;top:644px;font-size:11.35px;line-height:15px;color:#222'>utf8mb4_unicode_520_ci</div>
<div class='a m' style='right:129.79999999999995px;top:647.2px;font-size:9.4px;letter-spacing:-0.75px;line-height:13px;color:#1e95cc'>32,0 KiB</div>
<div class='a t' style='left:1338px;top:645px;color:#555'>-</div>
<div class='a' style='left:216px;top:669px;width:1134px;height:1px;background:#e8eaee'></div><div class='a' style='left:216px;top:670px;width:1134px;height:1px;background:#f0f1f4'></div>
<input type='checkbox' checked class='a' style='left:224px;top:682px;width:12px;height:12px;margin:0'>
<div class='a lk' style='left:254px;top:680px;font-size:12.3px;line-height:15px'>ZJYJLBpdyoast_primary_term</div>
<svg class='a' style='left:517px;top:680px' width='14' height='14'><use href='#star'/></svg>
<div class='a lk t' style='left:556px;top:679px'>Anzeigen</div>
<svg class='a' style='left:540px;top:681px' width='13' height='13'><use href='#browse'/></svg>
<div class='a lk t' style='left:625px;top:679px'>Struktur</div>
<svg class='a' style='left:608px;top:681px' width='14' height='13'><use href='#struct'/></svg>
<div class='a lk t' style='left:688px;top:679px'>Suche</div>
<svg class='a' style='left:673px;top:681px' width='12' height='13'><use href='#search'/></svg>
<div class='a lk t' style='left:741.5px;top:679px'>Einfügen</div>
<svg class='a' style='left:725px;top:681px' width='13' height='13'><use href='#insert'/></svg>
<div class='a lk t' style='left:808px;top:679px'>Leeren</div>
<svg class='a' style='left:791px;top:680px' width='13' height='14'><use href='#empty'/></svg>
<div class='a lk t' style='left:864.5px;top:679px'>Löschen</div>
<svg class='a' style='left:849px;top:681px' width='12' height='12'><use href='#drop'/></svg>
<div class='a m' style='right:398px;top:682.2px;font-size:9.4px;letter-spacing:-0.75px;line-height:13px;color:#333'>1</div>
<div class='a t w' style='left:1018px;top:679px;color:#222'>InnoDB</div>
<div class='a w' style='left:1077px;top:679px;font-size:11.35px;line-height:15px;color:#222'>utf8mb4_unicode_520_ci</div>
<div class='a m' style='right:129.79999999999995px;top:682.2px;font-size:9.4px;letter-spacing:-0.75px;line-height:13px;color:#1e95cc'>48,0 KiB</div>
<div class='a t' style='left:1338px;top:680px;color:#555'>-</div>
<div class='a' style='left:216px;top:704px;width:1134px;height:1px;background:#e8eaee'></div><div class='a' style='left:216px;top:705px;width:1134px;height:1px;background:#f0f1f4'></div>
<input type='checkbox' checked class='a' style='left:224px;top:717px;width:12px;height:12px;margin:0'>
<div class='a lk' style='left:254px;top:715px;font-size:12.3px;line-height:15px'>ZJYJLBpdyoast_seo_links</div>
<svg class='a' style='left:517px;top:715px' width='14' height='14'><use href='#star'/></svg>
<div class='a lk t' style='left:556px;top:714px'>Anzeigen</div>
<svg class='a' style='left:540px;top:716px' width='13' height='13'><use href='#browse'/></svg>
<div class='a lk t' style='left:625px;top:714px'>Struktur</div>
<svg class='a' style='left:608px;top:716px' width='14' height='13'><use href='#struct'/></svg>
<div class='a lk t' style='left:688px;top:714px'>Suche</div>
<svg class='a' style='left:673px;top:716px' width='12' height='13'><use href='#search'/></svg>
<div class='a lk t' style='left:741.5px;top:714px'>Einfügen</div>
<svg class='a' style='left:725px;top:716px' width='13' height='13'><use href='#insert'/></svg>
<div class='a lk t' style='left:808px;top:714px'>Leeren</div>
<svg class='a' style='left:791px;top:715px' width='13' height='14'><use href='#empty'/></svg>
<div class='a lk t' style='left:864.5px;top:714px'>Löschen</div>
<svg class='a' style='left:849px;top:716px' width='12' height='12'><use href='#drop'/></svg>
<div class='a m' style='right:398px;top:717.2px;font-size:9.4px;letter-spacing:-0.75px;line-height:13px;color:#333'>66</div>
<div class='a t w' style='left:1018px;top:714px;color:#222'>InnoDB</div>
<div class='a w' style='left:1077px;top:714px;font-size:11.35px;line-height:15px;color:#222'>utf8_general_ci</div>
<div class='a m' style='right:129.79999999999995px;top:717.2px;font-size:9.4px;letter-spacing:-0.75px;line-height:13px;color:#1e95cc'>48,0 KiB</div>
<div class='a t' style='left:1338px;top:715px;color:#555'>-</div>
<div class='a' style='left:253px;top:749px;font-size:12px;line-height:15px;color:#555'>57 Tabellen</div>
<div class='a m' style='right:398px;top:750.5px;font-size:9.8px;letter-spacing:-0.5px;line-height:13px;color:#555'>37.179</div>
<div class='a' style='left:1019px;top:749px;font-size:12px;line-height:15px;color:#555'>InnoDB</div>
<div class='a' style='left:1078px;top:749px;font-size:12.4px;line-height:15px;color:#555'>utf8_general_ci</div>
<div class='a m' style='right:130px;top:750.5px;font-size:9.8px;letter-spacing:-0.5px;line-height:13px;color:#555'>231,0 MiB</div>
<div class='a m' style='right:58px;top:750.5px;font-size:9.8px;letter-spacing:-0.5px;line-height:13px;color:#555'>0 B</div>
<div class='a' style='left:216px;top:835px;width:1184px;height:1px;background:#50565c'></div><div class='a' style='left:216px;top:836px;width:1184px;height:1px;background:#a9acb0'></div>
<svg class='a' style='left:219px;top:846px' width='14' height='14'><use href='#print'/></svg>
<div class='a lk t' style='left:236px;top:845px'>Drucken</div>
<svg class='a' style='left:282px;top:847px' width='14' height='13'><use href='#sv'/></svg>
<div class='a lk' style='left:299px;top:845px;font-size:11.3px;line-height:15px'>Strukturverzeichnis</div>
<svg class='a' style='left:226px;top:791px' width='25' height='15' viewBox='0 0 25 15'><path d='M4.5 4 V13 H24' stroke='#555' stroke-width='1.6' fill='none'/><path d='M4.5 0.8 L8.2 5 H0.8 Z' fill='#000'/></svg>
<input type='checkbox' checked class='a' style='left:265px;top:793px;width:11px;height:11px;margin:0'>
<div class='a lk' style='left:284px;top:791.5px;font-size:10.8px;line-height:15px'>Alle auswählen</div>
<div class='a' style='left:212px;top:775px;width:169px;height:48px;border:3.5px solid #f00;border-radius:8px'></div>
<div class='a' style='left:395px;top:783px;width:216px;height:31px;background:#fff;border:1px solid #dcdcdc;border-radius:3px'></div>
<div class='a' style='left:410px;top:791.5px;font-size:12.2px;line-height:15px;color:#555'>markierte:</div>
<svg class='a' style='left:598px;top:796px' width='9' height='6' viewBox='0 0 9 6'><path d='M1 1 L4.5 4.5 L8 1' stroke='#555' stroke-width='1.2' fill='none'/></svg>
<div class='a' style='left:396px;top:430px;width:214px;height:353px;background:#fff;border:1px solid #b8b8b8;border-radius:5px;box-shadow:0 1px 3px rgba(0,0,0,.2);overflow:hidden'><div style='height:20.5px;background:#1a64d3'></div></div>
<div class='a' style='left:410.5px;top:434.0px;font-size:12.2px;line-height:15px;color:#fff;font-weight:normal'>markierte:</div>
<div class='a' style='left:410.5px;top:455.0px;font-size:12.2px;line-height:15px;color:#5a5e66;font-weight:normal'>Tabelle kopieren</div>
<div class='a' style='left:410.5px;top:476.5px;font-size:12.2px;line-height:15px;color:#5a5e66;font-weight:normal'>Erzeugung anzeigen</div>
<div class='a' style='left:410.5px;top:497.3px;font-size:12.2px;line-height:15px;color:#5a5e66;font-weight:normal'>Exportieren</div>
<div class='a' style='left:412px;top:519.0px;font-size:12.2px;line-height:15px;color:#5a5e66;font-weight:bold'>Daten oder Tabelle löschen</div>
<div class='a' style='left:422px;top:537.2px;font-size:12.2px;line-height:15px;color:#5a5e66;font-weight:normal'>Leeren</div>
<div class='a' style='left:422px;top:558.4px;font-size:12.2px;line-height:15px;color:#5a5e66;font-weight:normal'>Löschen</div>
<div class='a' style='left:412px;top:579.6px;font-size:12.2px;line-height:15px;color:#5a5e66;font-weight:bold'>Hilfsmittel</div>
<div class='a' style='left:422px;top:598.9px;font-size:12.2px;line-height:15px;color:#5a5e66;font-weight:normal'>Analysiere Tabelle</div>
<div class='a' style='left:422px;top:619.8px;font-size:12.2px;line-height:15px;color:#5a5e66;font-weight:normal'>Überprüfe Tabelle</div>
<div class='a' style='left:422px;top:641.0px;font-size:12.2px;line-height:15px;color:#5a5e66;font-weight:normal'>Prüfsummentabelle</div>
<div class='a' style='left:422px;top:661.9px;font-size:12.2px;line-height:15px;color:#5a5e66;font-weight:normal'>Optimiere Tabelle</div>
<div class='a' style='left:422px;top:682.7px;font-size:12.2px;line-height:15px;color:#5a5e66;font-weight:normal'>Repariere Tabelle</div>
<div class='a' style='left:412px;top:704.1px;font-size:12.2px;line-height:15px;color:#5a5e66;font-weight:bold'>Präfix</div>
<div class='a' style='left:422px;top:723.1px;font-size:12.2px;line-height:15px;color:#5a5e66;font-weight:normal'>Prefix der Tabelle voranstellen</div>
<div class='a' style='left:422px;top:744.2px;font-size:12.2px;line-height:15px;color:#5a5e66;font-weight:normal'>Tabellenprefix ersetzen</div>
<div class='a' style='left:422px;top:765.3px;font-size:12.2px;line-height:15px;color:#5a5e66;font-weight:normal'>Tabelle mit Prefix kopieren</div>
<div class='a' style='left:398px;top:646px;width:168px;height:47px;border:3.5px solid #f00;border-radius:7px'></div>
<div class='a' style='left:5px;top:151px;width:1.2px;height:720px;background:#b8b8b8'></div>
<div class='a' style='left:22px;top:154px;width:1.2px;height:717px;background:#b8b8b8'></div>
<div class='a' style='left:11px;top:148px;width:7px;height:1.2px;background:#b8b8b8'></div>
<div class='a' style='left:22px;top:224px;width:12px;height:1.2px;background:#b8b8b8'></div>
<svg class='a' style='left:0.5px;top:140px' width='12' height='12'><use href='#minus'/></svg>
<svg class='a' style='left:17px;top:140px' width='11' height='12'><use href='#sdb'/></svg>
<div class='a' style='left:33px;top:137px;font-size:11px;line-height:15px;color:#555d66'>dbs1228944</div>
<div class='a' style='left:31px;top:156px;width:151px;height:14px;background:#fff;border:1px solid #ddd;border-radius:3px'></div>
<div class='a' style='left:35px;top:157.5px;width:134px;overflow:hidden;font-size:7.9px;line-height:11px;color:#666'>Hier schreiben um zu filtern, Enter um a</div>
<div class='a' style='left:171px;top:156.5px;font-size:9px;line-height:12px;color:#8b1a1a;font-weight:bold'>X</div>
<div class='a' style='left:72px;top:178px;width:47px;height:30px;background:#fff;border:1px solid #ddd;border-radius:3px'></div>
<div class='a' style='left:86px;top:186.5px;font-size:12.5px;line-height:15px;color:#555'>1</div>
<svg class='a' style='left:107px;top:192px' width='8' height='5' viewBox='0 0 8 5'><path d='M0.8 0.8 L4 4 L7.2 0.8' stroke='#555' stroke-width='1.2' fill='none'/></svg>
<div class='a' style='left:126px;top:186px;font-size:12px;letter-spacing:0.3px;line-height:15px;color:#555'>&gt; &gt;&gt;</div>
<svg class='a' style='left:34px;top:215px' width='13' height='13'><use href='#newt'/></svg>
<div class='a' style='left:51px;top:213px;font-size:11px;line-height:15px;color:#555d66'>Neu</div>
<div class='a' style='left:0;top:230px;width:194px;height:641px;overflow:hidden'>
<div class='a' style='left:28px;top:13.5px;width:6px;height:1.2px;background:#b8b8b8'></div>
<svg class='a' style='left:17px;top:5.5px' width='12' height='12'><use href='#plus'/></svg>
<svg class='a' style='left:33px;top:5.0px' width='14' height='12'><use href='#struct'/></svg>
<div class='a w' style='left:51px;top:2.0px;font-size:11px;line-height:15px;color:#5d6470'>ZJYJLBpdactionscheduler_actions</div>
<div class='a' style='left:28px;top:33.3px;width:6px;height:1.2px;background:#b8b8b8'></div>
<svg class='a' style='left:17px;top:25.3px' width='12' height='12'><use href='#plus'/></svg>
<svg class='a' style='left:33px;top:24.8px' width='14' height='12'><use href='#struct'/></svg>
<div class='a w' style='left:51px;top:21.8px;font-size:11px;line-height:15px;color:#5d6470'>ZJYJLBpdactionscheduler_claims</div>
<div class='a' style='left:28px;top:53.2px;width:6px;height:1.2px;background:#b8b8b8'></div>
<svg class='a' style='left:17px;top:45.2px' width='12' height='12'><use href='#plus'/></svg>
<svg class='a' style='left:33px;top:44.7px' width='14' height='12'><use href='#struct'/></svg>
<div class='a w' style='left:51px;top:41.7px;font-size:11px;line-height:15px;color:#5d6470'>ZJYJLBpdactionscheduler_groups</div>
<div class='a' style='left:28px;top:73.0px;width:6px;height:1.2px;background:#b8b8b8'></div>
<svg class='a' style='left:17px;top:65.0px' width='12' height='12'><use href='#plus'/></svg>
<svg class='a' style='left:33px;top:64.5px' width='14' height='12'><use href='#struct'/></svg>
<div class='a w' style='left:51px;top:61.5px;font-size:11px;line-height:15px;color:#5d6470'>ZJYJLBpdactionscheduler_logs</div>
<div class='a' style='left:28px;top:92.9px;width:6px;height:1.2px;background:#b8b8b8'></div>
<svg class='a' style='left:17px;top:84.9px' width='12' height='12'><use href='#plus'/></svg>
<svg class='a' style='left:33px;top:84.4px' width='14' height='12'><use href='#struct'/></svg>
<div class='a w' style='left:51px;top:81.4px;font-size:11px;line-height:15px;color:#5d6470'>ZJYJLBpdchaty_contact_form_leads</div>
<div class='a' style='left:28px;top:112.7px;width:6px;height:1.2px;background:#b8b8b8'></div>
<svg class='a' style='left:17px;top:104.7px' width='12' height='12'><use href='#plus'/></svg>
<svg class='a' style='left:33px;top:104.2px' width='14' height='12'><use href='#struct'/></svg>
<div class='a w' style='left:51px;top:101.2px;font-size:11px;line-height:15px;color:#5d6470'>ZJYJLBpdcommentmeta</div>
<div class='a' style='left:28px;top:132.5px;width:6px;height:1.2px;background:#b8b8b8'></div>
<svg class='a' style='left:17px;top:124.5px' width='12' height='12'><use href='#plus'/></svg>
<svg class='a' style='left:33px;top:124.0px' width='14' height='12'><use href='#struct'/></svg>
<div class='a w' style='left:51px;top:121.0px;font-size:11px;line-height:15px;color:#5d6470'>ZJYJLBpdcomments</div>
<div class='a' style='left:28px;top:152.4px;width:6px;height:1.2px;background:#b8b8b8'></div>
<svg class='a' style='left:17px;top:144.4px' width='12' height='12'><use href='#plus'/></svg>
<svg class='a' style='left:33px;top:143.9px' width='14' height='12'><use href='#struct'/></svg>
<div class='a w' style='left:51px;top:140.9px;font-size:11px;line-height:15px;color:#5d6470'>ZJYJLBpde_events</div>
<div class='a' style='left:28px;top:172.2px;width:6px;height:1.2px;background:#b8b8b8'></div>
<svg class='a' style='left:17px;top:164.2px' width='12' height='12'><use href='#plus'/></svg>
<svg class='a' style='left:33px;top:163.7px' width='14' height='12'><use href='#struct'/></svg>
<div class='a w' style='left:51px;top:160.7px;font-size:11px;line-height:15px;color:#5d6470'>ZJYJLBpde_submissions</div>
<div class='a' style='left:28px;top:192.1px;width:6px;height:1.2px;background:#b8b8b8'></div>
<svg class='a' style='left:17px;top:184.1px' width='12' height='12'><use href='#plus'/></svg>
<svg class='a' style='left:33px;top:183.6px' width='14' height='12'><use href='#struct'/></svg>
<div class='a w' style='left:51px;top:180.6px;font-size:11px;line-height:15px;color:#5d6470'>ZJYJLBpde_submissions_actions_log</div>
<div class='a' style='left:28px;top:211.9px;width:6px;height:1.2px;background:#b8b8b8'></div>
<svg class='a' style='left:17px;top:203.9px' width='12' height='12'><use href='#plus'/></svg>
<svg class='a' style='left:33px;top:203.4px' width='14' height='12'><use href='#struct'/></svg>
<div class='a w' style='left:51px;top:200.4px;font-size:11px;line-height:15px;color:#5d6470'>ZJYJLBpde_submissions_values</div>
<div class='a' style='left:28px;top:231.7px;width:6px;height:1.2px;background:#b8b8b8'></div>
<svg class='a' style='left:17px;top:223.7px' width='12' height='12'><use href='#plus'/></svg>
<svg class='a' style='left:33px;top:223.2px' width='14' height='12'><use href='#struct'/></svg>
<div class='a w' style='left:51px;top:220.2px;font-size:11px;line-height:15px;color:#5d6470'>ZJYJLBpdformcraft_3_files</div>
<div class='a' style='left:28px;top:251.6px;width:6px;height:1.2px;background:#b8b8b8'></div>
<svg class='a' style='left:17px;top:243.6px' width='12' height='12'><use href='#plus'/></svg>
<svg class='a' style='left:33px;top:243.1px' width='14' height='12'><use href='#struct'/></svg>
<div class='a w' style='left:51px;top:240.1px;font-size:11px;line-height:15px;color:#5d6470'>ZJYJLBpdformcraft_3_forms</div>
<div class='a' style='left:28px;top:271.4px;width:6px;height:1.2px;background:#b8b8b8'></div>
<svg class='a' style='left:17px;top:263.4px' width='12' height='12'><use href='#plus'/></svg>
<svg class='a' style='left:33px;top:262.9px' width='14' height='12'><use href='#struct'/></svg>
<div class='a w' style='left:51px;top:259.9px;font-size:11px;line-height:15px;color:#5d6470'>ZJYJLBpdformcraft_3_progress</div>
<div class='a' style='left:28px;top:291.3px;width:6px;height:1.2px;background:#b8b8b8'></div>
<svg class='a' style='left:17px;top:283.3px' width='12' height='12'><use href='#plus'/></svg>
<svg class='a' style='left:33px;top:282.8px' width='14' height='12'><use href='#struct'/></svg>
<div class='a w' style='left:51px;top:279.8px;font-size:11px;line-height:15px;color:#5d6470'>ZJYJLBpdformcraft_3_submissions</div>
<div class='a' style='left:28px;top:311.1px;width:6px;height:1.2px;background:#b8b8b8'></div>
<svg class='a' style='left:17px;top:303.1px' width='12' height='12'><use href='#plus'/></svg>
<svg class='a' style='left:33px;top:302.6px' width='14' height='12'><use href='#struct'/></svg>
<div class='a w' style='left:51px;top:299.6px;font-size:11px;line-height:15px;color:#5d6470'>ZJYJLBpdformcraft_3_views</div>
<div class='a' style='left:28px;top:330.9px;width:6px;height:1.2px;background:#b8b8b8'></div>
<svg class='a' style='left:17px;top:322.9px' width='12' height='12'><use href='#plus'/></svg>
<svg class='a' style='left:33px;top:322.4px' width='14' height='12'><use href='#struct'/></svg>
<div class='a w' style='left:51px;top:319.4px;font-size:11px;line-height:15px;color:#5d6470'>ZJYJLBpdlinks</div>
<div class='a' style='left:28px;top:350.8px;width:6px;height:1.2px;background:#b8b8b8'></div>
<svg class='a' style='left:17px;top:342.8px' width='12' height='12'><use href='#plus'/></svg>
<svg class='a' style='left:33px;top:342.3px' width='14' height='12'><use href='#struct'/></svg>
<div class='a w' style='left:51px;top:339.3px;font-size:11px;line-height:15px;color:#5d6470'>ZJYJLBpdlitespeed_img_optm</div>
<div class='a' style='left:28px;top:370.6px;width:6px;height:1.2px;background:#b8b8b8'></div>
<svg class='a' style='left:17px;top:362.6px' width='12' height='12'><use href='#plus'/></svg>
<svg class='a' style='left:33px;top:362.1px' width='14' height='12'><use href='#struct'/></svg>
<div class='a w' style='left:51px;top:359.1px;font-size:11px;line-height:15px;color:#5d6470'>ZJYJLBpdlitespeed_url</div>
<div class='a' style='left:28px;top:390.5px;width:6px;height:1.2px;background:#b8b8b8'></div>
<svg class='a' style='left:17px;top:382.5px' width='12' height='12'><use href='#plus'/></svg>
<svg class='a' style='left:33px;top:382.0px' width='14' height='12'><use href='#struct'/></svg>
<div class='a w' style='left:51px;top:379.0px;font-size:11px;line-height:15px;color:#5d6470'>ZJYJLBpdlitespeed_url_file</div>
<div class='a' style='left:28px;top:410.3px;width:6px;height:1.2px;background:#b8b8b8'></div>
<svg class='a' style='left:17px;top:402.3px' width='12' height='12'><use href='#plus'/></svg>
<svg class='a' style='left:33px;top:401.8px' width='14' height='12'><use href='#struct'/></svg>
<div class='a w' style='left:51px;top:398.8px;font-size:11px;line-height:15px;color:#5d6470'>ZJYJLBpdnextend2_image_storage</div>
<div class='a' style='left:28px;top:430.1px;width:6px;height:1.2px;background:#b8b8b8'></div>
<svg class='a' style='left:17px;top:422.1px' width='12' height='12'><use href='#plus'/></svg>
<svg class='a' style='left:33px;top:421.6px' width='14' height='12'><use href='#struct'/></svg>
<div class='a w' style='left:51px;top:418.6px;font-size:11px;line-height:15px;color:#5d6470'>ZJYJLBpdnextend2_section_storage</div>
<div class='a' style='left:28px;top:450.0px;width:6px;height:1.2px;background:#b8b8b8'></div>
<svg class='a' style='left:17px;top:442.0px' width='12' height='12'><use href='#plus'/></svg>
<svg class='a' style='left:33px;top:441.5px' width='14' height='12'><use href='#struct'/></svg>
<div class='a w' style='left:51px;top:438.5px;font-size:11px;line-height:15px;color:#5d6470'>ZJYJLBpdnextend2_smartslider3_generators</div>
<div class='a' style='left:28px;top:469.8px;width:6px;height:1.2px;background:#b8b8b8'></div>
<svg class='a' style='left:17px;top:461.8px' width='12' height='12'><use href='#plus'/></svg>
<svg class='a' style='left:33px;top:461.3px' width='14' height='12'><use href='#struct'/></svg>
<div class='a w' style='left:51px;top:458.3px;font-size:11px;line-height:15px;color:#5d6470'>ZJYJLBpdnextend2_smartslider3_sliders</div>
<div class='a' style='left:28px;top:489.7px;width:6px;height:1.2px;background:#b8b8b8'></div>
<svg class='a' style='left:17px;top:481.7px' width='12' height='12'><use href='#plus'/></svg>
<svg class='a' style='left:33px;top:481.2px' width='14' height='12'><use href='#struct'/></svg>
<div class='a w' style='left:51px;top:478.2px;font-size:11px;line-height:15px;color:#5d6470'>ZJYJLBpdnextend2_smartslider3_sliders_xref</div>
<div class='a' style='left:28px;top:509.5px;width:6px;height:1.2px;background:#b8b8b8'></div>
<svg class='a' style='left:17px;top:501.5px' width='12' height='12'><use href='#plus'/></svg>
<svg class='a' style='left:33px;top:501.0px' width='14' height='12'><use href='#struct'/></svg>
<div class='a w' style='left:51px;top:498.0px;font-size:11px;line-height:15px;color:#5d6470'>ZJYJLBpdnextend2_smartslider3_slides</div>
<div class='a' style='left:28px;top:529.3px;width:6px;height:1.2px;background:#b8b8b8'></div>
<svg class='a' style='left:17px;top:521.3px' width='12' height='12'><use href='#plus'/></svg>
<svg class='a' style='left:33px;top:520.8px' width='14' height='12'><use href='#struct'/></svg>
<div class='a w' style='left:51px;top:517.8px;font-size:11px;line-height:15px;color:#5d6470'>ZJYJLBpdoptions</div>
<div class='a' style='left:28px;top:549.2px;width:6px;height:1.2px;background:#b8b8b8'></div>
<svg class='a' style='left:17px;top:541.2px' width='12' height='12'><use href='#plus'/></svg>
<svg class='a' style='left:33px;top:540.7px' width='14' height='12'><use href='#struct'/></svg>
<div class='a w' style='left:51px;top:537.7px;font-size:11px;line-height:15px;color:#5d6470'>ZJYJLBpdpda_passwords</div>
<div class='a' style='left:28px;top:569.0px;width:6px;height:1.2px;background:#b8b8b8'></div>
<svg class='a' style='left:17px;top:561.0px' width='12' height='12'><use href='#plus'/></svg>
<svg class='a' style='left:33px;top:560.5px' width='14' height='12'><use href='#struct'/></svg>
<div class='a w' style='left:51px;top:557.5px;font-size:11px;line-height:15px;color:#5d6470'>ZJYJLBpdpostmeta</div>
<div class='a' style='left:28px;top:588.9px;width:6px;height:1.2px;background:#b8b8b8'></div>
<svg class='a' style='left:17px;top:580.9px' width='12' height='12'><use href='#plus'/></svg>
<svg class='a' style='left:33px;top:580.4px' width='14' height='12'><use href='#struct'/></svg>
<div class='a w' style='left:51px;top:577.4px;font-size:11px;line-height:15px;color:#5d6470'>ZJYJLBpdposts</div>
<div class='a' style='left:28px;top:608.7px;width:6px;height:1.2px;background:#b8b8b8'></div>
<svg class='a' style='left:17px;top:600.7px' width='12' height='12'><use href='#plus'/></svg>
<svg class='a' style='left:33px;top:600.2px' width='14' height='12'><use href='#struct'/></svg>
<div class='a w' style='left:51px;top:597.2px;font-size:11px;line-height:15px;color:#5d6470'>ZJYJLBpdtermmeta</div>
<div class='a' style='left:28px;top:628.5px;width:6px;height:1.2px;background:#b8b8b8'></div>
<svg class='a' style='left:17px;top:620.5px' width='12' height='12'><use href='#plus'/></svg>
<svg class='a' style='left:33px;top:620.0px' width='14' height='12'><use href='#struct'/></svg>
<div class='a w' style='left:51px;top:617.0px;font-size:11px;line-height:15px;color:#5d6470'>ZJYJLBpdterms</div>
<div class='a' style='left:28px;top:648.4px;width:6px;height:1.2px;background:#b8b8b8'></div>
<svg class='a' style='left:17px;top:640.4px' width='12' height='12'><use href='#plus'/></svg>
<svg class='a' style='left:33px;top:639.9px' width='14' height='12'><use href='#struct'/></svg>
<div class='a w' style='left:51px;top:636.9px;font-size:11px;line-height:15px;color:#5d6470'>ZJYJLBpdtermrelationships</div>
</div>
<div class='a' style='left:1px;top:98px;width:49px;height:17px;border:1px solid #e2e2e2;border-radius:4px;background:#fff'></div>
<div class='a' style='left:6px;top:99.5px;font-size:11.6px;line-height:13px;color:#444;transform:scaleX(0.93);transform-origin:0 0'>LETZTE</div>
<div class='a' style='left:53px;top:98px;width:67px;height:17px;border:1px solid #e2e2e2;border-radius:4px;background:#fff'></div>
<div class='a' style='left:58.5px;top:99.5px;font-size:11.6px;line-height:13px;color:#444;transform:scaleX(0.87);transform-origin:0 0'>FAVORITEN</div>
<svg class='a' style='left:162px;top:120px' width='12' height='7' viewBox='0 0 12 7'><rect x='0.6' y='0.6' width='6' height='5.8' rx='2.9' fill='none' stroke='#777' stroke-width='1.2'/><rect x='5.4' y='0.6' width='6' height='5.8' rx='2.9' fill='none' stroke='#777' stroke-width='1.2'/><rect x='3.6' y='2.2' width='4.8' height='2.6' rx='1.2' fill='#fff' stroke='#555' stroke-width='1.1'/></svg>
<div class='a' style='left:15.5px;top:40px;font-size:17.7px;line-height:22px;font-style:italic;-webkit-text-stroke:0.45px;transform:scaleX(1.155);transform-origin:0 0'><span style='color:#1c3a8a'>php</span><span style='color:#2a8ac8'>MyAdmin</span></div>
<svg class='a' style='left:38px;top:4px' width='106' height='34' viewBox='0 0 106 34'><g fill='none' stroke='#0f3d91' stroke-width='4.6' stroke-linecap='round' stroke-linejoin='round'><path d='M4.4 4.4 V29.5'/><rect x='18.9' y='4.4' width='10.7' height='25.1' rx='5.3'/><path d='M42.6 29.5 V4.4 L54.6 29.5 V4.4'/><path d='M41.5 8.5 L53.8 33' stroke='#fff' stroke-width='0.7'/><rect x='69' y='4.4' width='10.7' height='25.1' rx='5.3'/><path d='M100.4 8.5 C99.5 3 88.7 3 88.7 9.5 C88.7 16 100.6 15 100.6 23 C100.6 31 89 31 88.4 25.5'/></g></svg>
<svg class='a' style='left:137px;top:34px' width='30' height='14' viewBox='0 0 30 14'><path d='M10 4 C13 1 16 1 19 3.5 C22 1 25 1 28 3' stroke='#2a9ad6' stroke-width='1.3' fill='none'/><path d='M1 10.5 C4 7.5 7 7.5 10 10 C13 7.5 16 7.5 19 9.5' stroke='#2a9ad6' stroke-width='1.3' fill='none'/></svg>
<svg class='a' style='left:46px;top:77px' width='97' height='14' viewBox='0 0 97 14'><path d='M1 7 L7 1.5 L13 7' stroke='#b98246' stroke-width='2.2' fill='none'/><rect x='3' y='6.5' width='8' height='5.5' fill='#eee' stroke='#aaa' stroke-width='0.6'/><rect x='5.5' y='8' width='3' height='4' fill='#777'/><rect x='0.5' y='11.5' width='13' height='2' rx='1' fill='#5cb84a'/><rect x='17.5' y='2' width='7' height='11' fill='#777'/><path d='M18 7.5 L22 5 V10 Z' fill='#5cb84a'/><rect x='21' y='6.6' width='4' height='2' fill='#5cb84a'/><path d='M25 2 L31 0.5 V13.5 L25 13 Z' fill='#d39a48'/><circle cx='41' cy='7' r='6' fill='#6f9bd8'/><circle cx='41' cy='7' r='4.3' fill='#4f7fcc'/><text x='41' y='10' font-size='8' font-weight='bold' fill='#fff' text-anchor='middle' font-family='Liberation Sans'>?</text><rect x='51.5' y='1.5' width='8' height='11' rx='1' fill='#f2f2f2' stroke='#ccc'/><path d='M56 0.5 H62 L64 2.5 V13 H57' fill='#fafafa' stroke='#d0d0d0' stroke-width='0.8'/><circle cx='74' cy='7' r='5.4' fill='none' stroke='#9a9a9a' stroke-width='2.4' stroke-dasharray='2.3 1.94'/><circle cx='74' cy='7' r='4.6' fill='#b4b4b4'/><circle cx='74' cy='7' r='1.9' fill='#fff'/><path d='M94 5 A5 5 0 1 0 94.5 9' stroke='#5cb84a' stroke-width='2.6' fill='none'/><path d='M92 8 L96 8.5 L94 12.5 Z' fill='#3e9a33'/></svg>
</body></html>
